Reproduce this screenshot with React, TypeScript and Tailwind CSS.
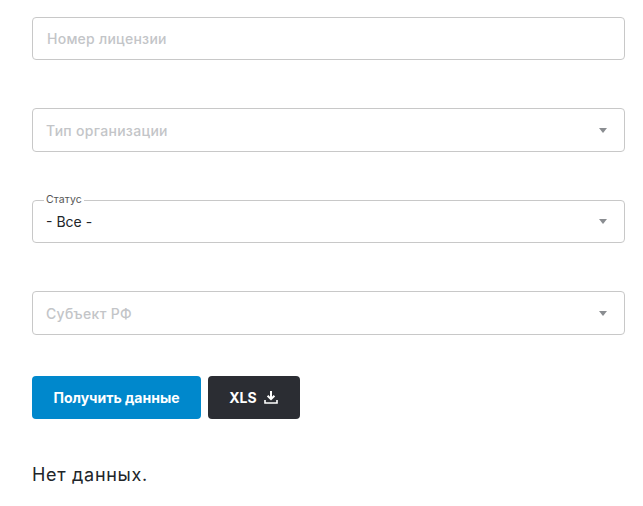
function Caret() {
  return (
    <svg width="8" height="5" viewBox="0 0 8 5" className="mr-[1px] shrink-0">
      <path d="M0 0h8L4 5z" fill="#8a8d91" />
    </svg>
  )
}

function Select({ label, value }: { label?: string; value?: string }) {
  return (
    <div className="relative flex h-full items-center justify-between rounded border border-[#c8c8c8] bg-white pl-[13px] pr-[16px]">
      {label && (
        <span className="absolute -top-[8px] left-[11px] bg-white px-[2px] text-[10.5px] leading-[14px] tracking-[0.1px] text-[#555]">
          {label}
        </span>
      )}
      {value ? (
        <span className="text-[14px] text-[#212529]">{value}</span>
      ) : null}
      <Caret />
    </div>
  )
}

function Placeholder({ text }: { text: string }) {
  return (
    <div className="relative flex h-full items-center justify-between rounded border border-[#c8c8c8] bg-white pl-[13px] pr-[16px]">
      <span className="text-[14px] font-medium tracking-[0.3px] text-[#c3c5c8]">{text}</span>
      <Caret />
    </div>
  )
}

export default function App() {
  return (
    <div className="h-[506px] w-[643px] overflow-hidden bg-white pl-[32px] pr-[18px] pt-[17px] font-['Inter',sans-serif]">
      <div className="flex h-[43px] items-center rounded border border-[#c8c8c8] pl-[14px]">
        <span className="text-[14px] font-medium tracking-[0.25px] text-[#c3c5c8]">Номер лицензии</span>
      </div>
      <div className="mt-[48px] h-[44px]">
        <Placeholder text="Тип организации" />
      </div>
      <div className="mt-[48px] h-[43px]">
        <Select label="Статус" value="- Все -" />
      </div>
      <div className="mt-[48px] h-[44px]">
        <Placeholder text="Субъект РФ" />
      </div>
      <div className="mt-[41px] flex gap-[7px]">
        <button className="h-[43px] w-[169px] rounded bg-[#0088cc] pb-[1px] text-[14px] font-bold text-white">
          Получить данные
        </button>
        <button className="flex h-[43px] w-[92px] items-center justify-center gap-[7px] rounded bg-[#2b2d33] pb-[1px] pr-[1px] text-[14px] font-bold text-white">
          XLS
          <svg width="14" height="13" viewBox="0 0 14 13" fill="none" stroke="currentColor" strokeWidth="2">
            <path d="M7 0v7.5" />
            <path d="M3.6 4.8 7 8.2l3.4-3.4" />
            <path d="M1 9v3h12V9" strokeWidth="1.6" />
          </svg>
        </button>
      </div>
      <p className="mt-[44px] text-[18px] leading-[24px] tracking-[0.7px] text-[#212529]">Нет данных.</p>
    </div>
  )
}
